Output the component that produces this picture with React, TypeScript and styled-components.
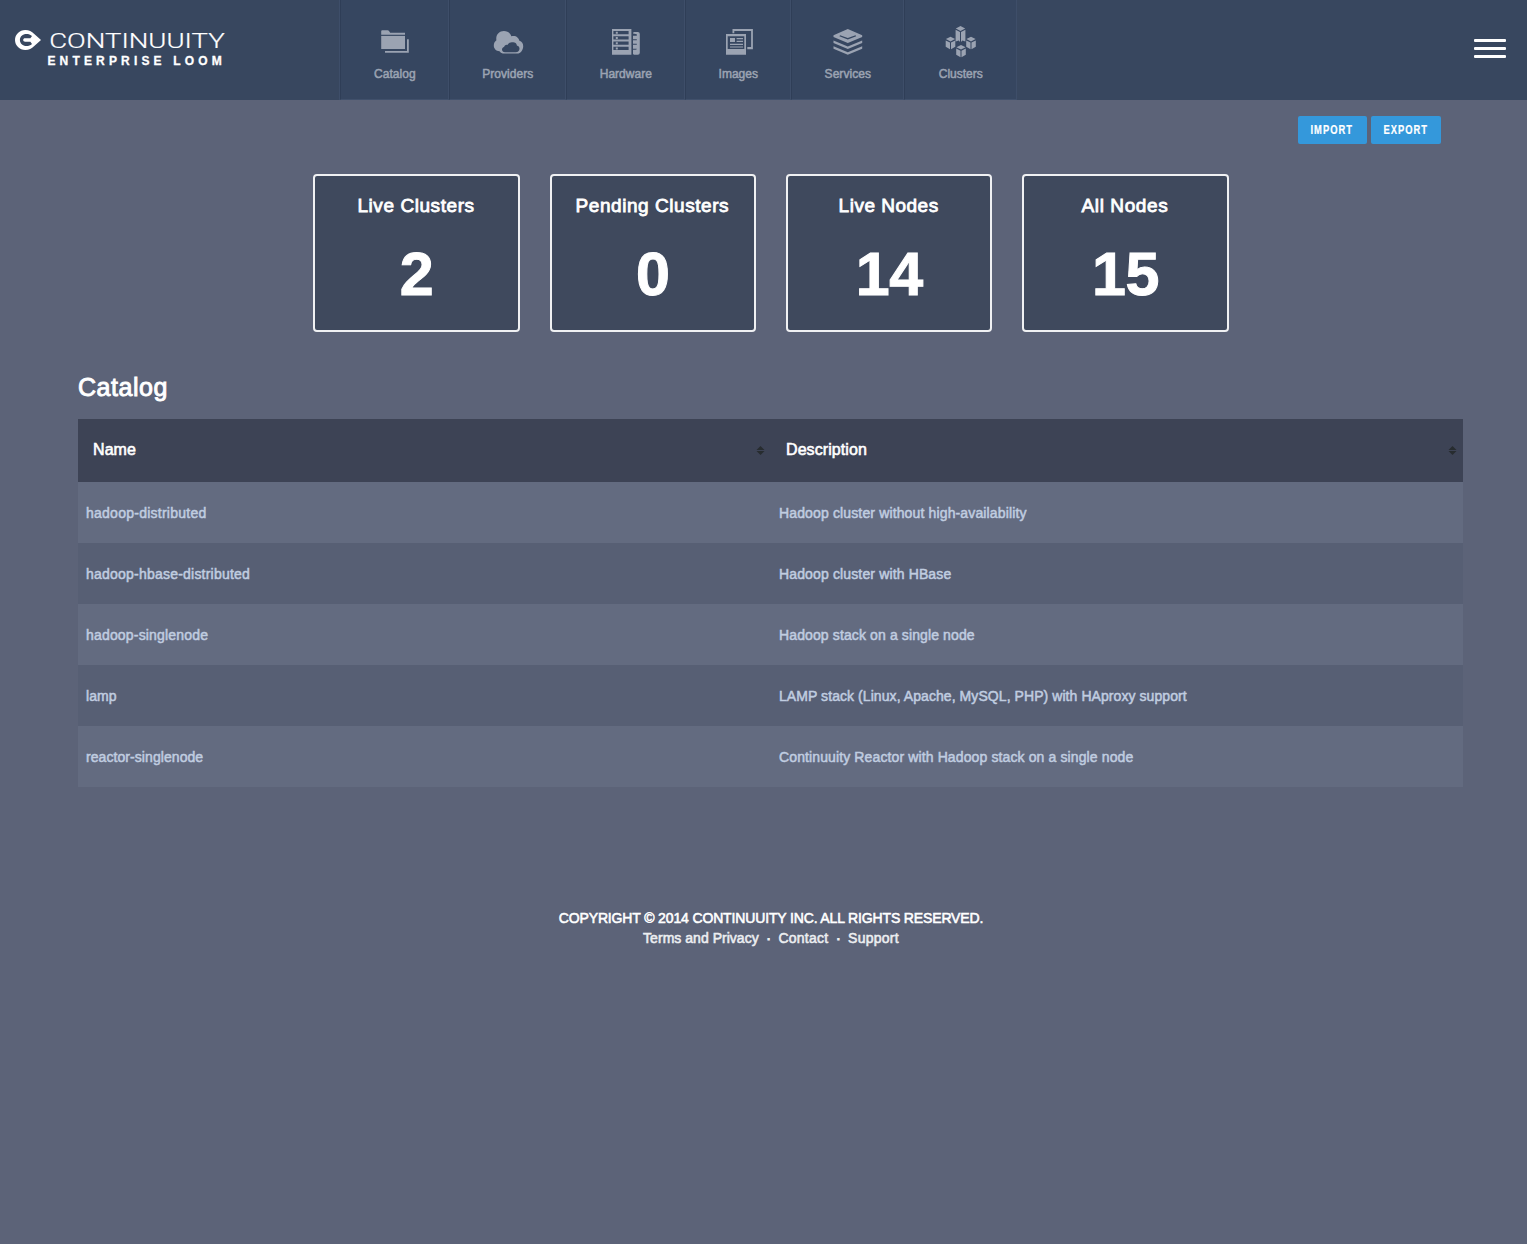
import React from "react";
import styled, { createGlobalStyle } from "styled-components";

const GlobalStyle = createGlobalStyle`
  * { box-sizing: border-box; }
  html, body { margin: 0; padding: 0; }
  body {
    background: #5c6378;
    color: #fff;
    font-family: "Liberation Sans", Arial, sans-serif;
    min-height: 1244px;
  }
  a { color: inherit; text-decoration: none; }
`;

const Header = styled.header`
  display: flex;
  height: 100px;
  background: #38475f;
`;

const Brand = styled.a`
  width: 339px;
  padding: 28px 0 0 14px;
  svg { display: block; }
`;

const Nav = styled.nav`
  display: flex;
  border-left: 1px solid #3e4e69;
`;

const NavItem = styled.a<{ $width: number }>`
  display: flex;
  flex-direction: column;
  align-items: center;
  width: ${(p) => p.$width}px;
  padding-top: 26px;
  background: #364660;
  border-left: 1px solid #2f3e57;
  border-right: 1px solid #3e4e69;
  border-bottom: 1px solid #40506b;
  color: #9ba3b2;
  svg { display: block; fill: currentColor; }
`;

const NavLabel = styled.span<{ $spacing: number }>`
  margin-top: 9px;
  padding-left: 0.6px;
  font-size: 12px;
  line-height: 14px;
  white-space: nowrap;
  letter-spacing: ${(p) => p.$spacing}px;
  -webkit-text-stroke: 0.5px currentColor;
`;

const MenuButton = styled.button`
  display: flex;
  flex-direction: column;
  gap: 5px;
  width: 32px;
  margin: 39px 21px 0 auto;
  padding: 0;
  border: 0;
  background: none;
  align-self: flex-start;
`;

const MenuBar = styled.span`
  height: 3px;
  border-radius: 1px;
  background: #fff;
`;

const Actions = styled.div`
  display: flex;
  justify-content: flex-end;
  gap: 4px;
  padding: 16px 86px 0 0;
`;

const ActionButton = styled.button<{ $width: number }>`
  width: ${(p) => p.$width}px;
  height: 28px;
  padding: 0;
  border: 0;
  border-radius: 2px;
  background: #3498db;
  color: #fff;
  svg { display: block; }
`;

const Stats = styled.section`
  display: grid;
  grid-template-columns: repeat(4, 206.3px);
  gap: 30px;
  margin: 30px 0 0 313.4px;
`;

const StatCard = styled.div`
  height: 158px;
  border: 2px solid #f0f1f3;
  border-radius: 4px;
  background: #3f495d;
  text-align: center;
`;

const StatTitle = styled.div<{ $spacing: number }>`
  padding: 19px 1px 0 0;
  font-size: 19px;
  line-height: 22px;
  letter-spacing: ${(p) => p.$spacing}px;
  -webkit-text-stroke: 0.8px #fff;
`;

const StatValue = styled.div`
  margin-top: 23px;
  font-size: 61px;
  line-height: 68px;
  font-weight: bold;
  letter-spacing: -0.5px;
  -webkit-text-stroke: 1px #fff;
`;

const Catalog = styled.main`
  width: 1385px;
  margin: 39px 0 0 78px;
`;

const Heading = styled.h1`
  margin: 0 0 15px;
  font-size: 25px;
  line-height: 33px;
  font-weight: normal;
  letter-spacing: 0.55px;
  -webkit-text-stroke: 0.9px #fff;
`;

const TableHead = styled.div`
  display: grid;
  grid-template-columns: 693px 692px;
  height: 63px;
  background: #3d4355;
`;

const HeadCell = styled.div`
  display: flex;
  align-items: center;
  justify-content: space-between;
  padding: 0 6px 2px 15px;
  font-size: 16px;
  letter-spacing: 0.08px;
  -webkit-text-stroke: 0.6px #fff;
`;

const SortIcon = styled.svg`
  width: 9px;
  height: 9px;
  margin-top: 1px;
  fill: #272c2f;
`;

const Row = styled.div`
  display: grid;
  grid-template-columns: 693px 692px;
  height: 61px;
  background: #575f74;
  color: #c0cde0;
  &:nth-child(even) { background: #636b80; }
`;

const Cell = styled.div<{ $spacing: number }>`
  padding: 22px 8px 0;
  font-size: 14px;
  line-height: 18px;
  letter-spacing: ${(p) => p.$spacing}px;
  -webkit-text-stroke: 0.5px currentColor;
`;

const Footer = styled.footer`
  width: 1542px;
  margin-top: 121px;
  text-align: center;
  font-size: 14px;
  line-height: 20px;
  -webkit-text-stroke: 0.55px currentColor;
`;

const Copyright = styled.div`
  letter-spacing: -0.145px;
`;

const FooterLinks = styled.div`
  display: flex;
  justify-content: center;
  gap: 7.5px;
  color: #eceef1;
`;

const FooterLink = styled.a<{ $spacing: number }>`
  letter-spacing: ${(p) => p.$spacing}px;
`;

const Separator = styled.span`
  -webkit-text-stroke: 1px currentColor;
`;

const Logo = () => (
  <svg width="214" height="42" viewBox="14 28 214 42">
    <path
      fill="#fff"
      fillRule="evenodd"
      d="M25.3 30C29 30 31.8 31.6 34 33.8L41 40L34 46.2C31.8 48.4 29 50 25.3 50C19.6 50 15 45.5 15 40S19.6 30 25.3 30ZM32 36.1C30.5 34.6 28.6 34 26.4 34C22.7 34 19.9 36.6 19.9 40S22.7 46 26.4 46C28.6 46 30.5 45.4 32 43.9L30.4 41.7H25.2C23.9 41.7 23.2 41.1 23.2 40S23.9 38.3 25.2 38.3H30.4Z"
    />
    <text x="49.2" y="47.6" fill="#fff" stroke="#fff" strokeWidth="0.2" fontFamily="Roboto" fontWeight="300" fontSize="21" textLength="175.6" lengthAdjust="spacingAndGlyphs">
      CONTINUUITY
    </text>
    <text x="47.4" y="65" fill="#fff" stroke="#fff" strokeWidth="0.3" fontFamily="Liberation Sans" fontWeight="bold" fontSize="12" textLength="174.3" lengthAdjust="spacing">
      ENTERPRISE LOOM
    </text>
  </svg>
);

const CatalogIcon = () => (
  <svg width="32" height="32" viewBox="379 26 32 32">
    <path d="M381.2 31.2Q381.2 30.2 382.2 30.2H387.6Q388.6 30.2 389 31L390.2 32.7H405V34.8H381.2Z" />
    <path d="M381.2 35.9H405V49H381.2Z" />
    <path d="M407 39.3H408.8V52.8H385V51H407Z" />
  </svg>
);

const ProvidersIcon = () => (
  <svg width="32" height="32" viewBox="492 26 32 32">
    <path
      fillRule="evenodd"
      d="M499.5 51.3C496 51 493.8 48.6 493.8 45.5C493.8 43 495 41.3 496.4 40.3C495.5 35 499 31 503.9 31C507.5 31 510.2 33 511.3 36.2C515.5 35 518.8 37.4 519.4 40.8C521.9 41.7 523.2 43.6 523.2 46.2C523.2 49.6 521 53.6 517 53.6H504.5C502 53.6 500.5 52.8 499.5 51.3ZM505 52.2H515.7C518 52.2 519.5 50.5 519.5 48.7C519.5 47 518.4 45.8 516.9 45.5C516.6 43.4 514.9 42.2 512.9 42.3C510.8 41.8 508.4 42.9 507.8 44.8C505.7 44.3 504.3 45.4 504.1 47C502.8 47.3 502 48.3 502 49.5C502 51.1 503.2 52.2 505 52.2Z"
    />
  </svg>
);

const HardwareIcon = () => (
  <svg width="32" height="32" viewBox="610 26 32 32">
    <path fillRule="evenodd" d="M612 29H631.4V54.8H612ZM613.4 31V34.3H628.6V31ZM613.4 36.2V39.5H628.6V36.2ZM613.4 41.5V44.8H628.6V41.5ZM613.4 46.8V50.1H628.6V46.8Z" />
    <path d="M615.8 31.8h2v2h-2zM615.8 37h2v2h-2zM615.8 42.2h2v2h-2zM615.8 47.5h2v2h-2z" />
    <path d="M633 33.6V32.8L634 32H637.8Q639.8 32 639.8 34V52.8Q639.8 54.8 637.8 54.8H634L633 54V49.7H635.5Q636.8 49.7 636.8 48.7H633V44.8H636.8V43.8H633V40.2H636.8V39.2H633V35.8H636.8V34.3Z" />
  </svg>
);

const ImagesIcon = () => (
  <svg width="32" height="32" viewBox="722 26 32 32">
    <path d="M732.5 29H752.9V49.2H747.3V47H751.1V31H734.3V33.2H732.5Z" />
    <path fillRule="evenodd" d="M726 34H746V54.8H726ZM727.7 36.2V49H744.3V36.2Z" />
    <path d="M730 38.1h5v4h-5zM736.6 38.1h6.4v1.2h-6.4zM736.6 40.8h6.4v1.2h-6.4zM730 43.7h13v1.2h-13zM730 46.4h13v1.2h-13z" />
  </svg>
);

const ServicesIcon = () => (
  <svg width="32" height="32" viewBox="832 26 32 32">
    <path fillRule="evenodd" d="M847.8 29L862.2 35.3V36.9L847.8 43L833.5 36.9V35.3ZM840.1 35.3L839.4 36.2L847.8 39.4L856.2 36.2L855.5 35.3L847.8 38Z" />
    <path d="M833.5 40.5L847.8 46.5L862.2 40.5V42.9L847.8 48.9L833.5 42.9Z" />
    <path d="M833.5 46.3L847.8 52.3L862.2 46.3V48.7L847.8 54.7L833.5 48.7Z" />
  </svg>
);

const ClustersIcon = () => (
  <svg width="32" height="32" viewBox="945 26 32 32">
    <path d="M960.5 26L965.2 28.5L960.5 31L955.8 28.5ZM955.6 29.8L960 32.1V42L958.8 40.6L955.6 41.6ZM965.4 29.8V41.6L962.4 40.6L961 42V32.1Z" />
    <path d="M950.5 36.8L955.1 39.1L950.5 41.5L945.9 39.1ZM945.7 40.4L950 42.6V49.2L945.7 46.7ZM955.3 40.4V46.7L951 49.2V42.6Z" />
    <path d="M971 36.8L975.6 39.1L971 41.5L966.4 39.1ZM966.2 40.4L970.5 42.6V49.2L966.2 46.7ZM975.8 40.4V46.7L971.5 49.2V42.6Z" />
    <path d="M961 44.9L965.6 47.2L961 49.6L956.4 47.2ZM956.2 48.5L960.5 50.7V57.3L956.2 54.8ZM965.8 48.5V54.8L961.5 57.3V50.7Z" />
  </svg>
);

const navItems = [
  { label: "Catalog", width: 109, spacing: 0.05, Icon: CatalogIcon },
  { label: "Providers", width: 117, spacing: 0.05, Icon: ProvidersIcon },
  { label: "Hardware", width: 119, spacing: 0, Icon: HardwareIcon },
  { label: "Images", width: 106, spacing: 0, Icon: ImagesIcon },
  { label: "Services", width: 113, spacing: 0.05, Icon: ServicesIcon },
  { label: "Clusters", width: 113, spacing: 0, Icon: ClustersIcon },
];

const actions = [
  { label: "IMPORT", width: 69, textWidth: 42.6 },
  { label: "EXPORT", width: 70, textWidth: 44.6 },
];

const stats = [
  { title: "Live Clusters", value: 2, spacing: 0.57 },
  { title: "Pending Clusters", value: 0, spacing: 0.55 },
  { title: "Live Nodes", value: 14, spacing: 0.5 },
  { title: "All Nodes", value: 15, spacing: 0.6 },
];

const rows = [
  { name: "hadoop-distributed", nameSpacing: 0.25, description: "Hadoop cluster without high-availability", spacing: 0.14 },
  { name: "hadoop-hbase-distributed", nameSpacing: 0.22, description: "Hadoop cluster with HBase", spacing: 0.14 },
  { name: "hadoop-singlenode", nameSpacing: 0.18, description: "Hadoop stack on a single node", spacing: 0.12 },
  { name: "lamp", nameSpacing: 0.1, description: "LAMP stack (Linux, Apache, MySQL, PHP) with HAproxy support", spacing: 0.07 },
  { name: "reactor-singlenode", nameSpacing: 0.07, description: "Continuuity Reactor with Hadoop stack on a single node", spacing: 0.12 },
];

const Sort = () => (
  <SortIcon viewBox="0 0 9 9">
    <path d="M4.5 0L8.5 4H0.5ZM0.5 5H8.5L4.5 9Z" />
  </SortIcon>
);

export default function App() {
  return (
    <>
      <GlobalStyle />
      <Header>
        <Brand href="#">
          <Logo />
        </Brand>
        <Nav>
          {navItems.map(({ label, width, spacing, Icon }) => (
            <NavItem key={label} href="#" $width={width}>
              <Icon />
              <NavLabel $spacing={spacing}>{label}</NavLabel>
            </NavItem>
          ))}
        </Nav>
        <MenuButton aria-label="Menu">
          <MenuBar />
          <MenuBar />
          <MenuBar />
        </MenuButton>
      </Header>
      <Actions>
        {actions.map(({ label, width, textWidth }) => (
          <ActionButton key={label} $width={width}>
            <svg width={width} height="28">
              <text x="12.5" y="18" fill="#fff" stroke="#fff" strokeWidth="0.2" fontFamily="Liberation Sans" fontWeight="bold" fontSize="12" letterSpacing="1.3" textLength={textWidth} lengthAdjust="spacingAndGlyphs">
                {label}
              </text>
            </svg>
          </ActionButton>
        ))}
      </Actions>
      <Stats>
        {stats.map(({ title, value, spacing }) => (
          <StatCard key={title}>
            <StatTitle $spacing={spacing}>{title}</StatTitle>
            <StatValue>{value}</StatValue>
          </StatCard>
        ))}
      </Stats>
      <Catalog>
        <Heading>Catalog</Heading>
        <div>
          <TableHead>
            <HeadCell>Name<Sort /></HeadCell>
            <HeadCell>Description<Sort /></HeadCell>
          </TableHead>
          {rows.map((r) => (
            <Row key={r.name}>
              <Cell $spacing={r.nameSpacing}>{r.name}</Cell>
              <Cell $spacing={r.spacing}>{r.description}</Cell>
            </Row>
          ))}
        </div>
      </Catalog>
      <Footer>
        <Copyright>COPYRIGHT © 2014 CONTINUUITY INC. ALL RIGHTS RESERVED.</Copyright>
        <FooterLinks>
          <FooterLink href="#" $spacing={0.03}>Terms and Privacy</FooterLink>
          <Separator>·</Separator>
          <FooterLink href="#" $spacing={0.25}>Contact</FooterLink>
          <Separator>·</Separator>
          <FooterLink href="#" $spacing={0.25}>Support</FooterLink>
        </FooterLinks>
      </Footer>
    </>
  );
}
